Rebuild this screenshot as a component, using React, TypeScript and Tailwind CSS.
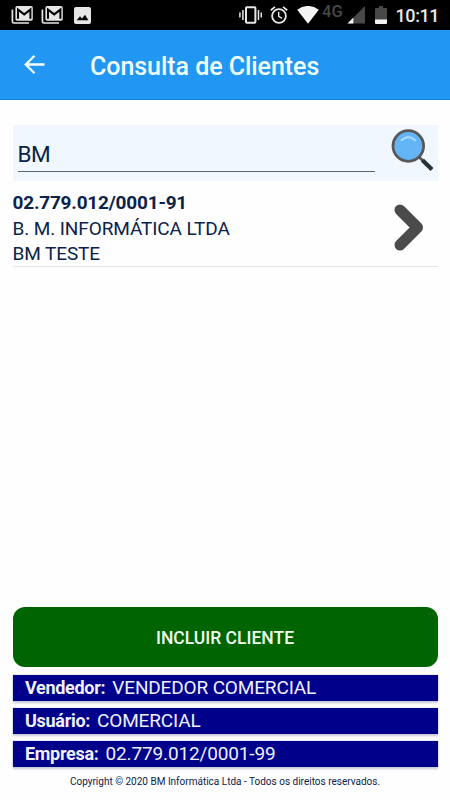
import React from "react";

function MailStackIcon() {
  return (
    <svg width="22" height="18" viewBox="0 0 22 18" className="block shrink-0">
      <path d="M1.4 3.5V15.5Q1.4 17 2.9 17H18" fill="none" stroke="#e6e6e6" strokeWidth="1.7" />
      <rect x="4.4" y="0" width="17.4" height="14.8" rx="1.8" fill="#e6e6e6" />
      <path d="M7 12.8V3.6L13.2 8.4L19.4 3.6V12.8" fill="none" stroke="#000" strokeWidth="2" />
    </svg>
  );
}

function ImageIcon() {
  return (
    <svg width="17" height="17" viewBox="0 0 17 17" className="block shrink-0">
      <rect width="17" height="17" rx="2" fill="#e6e6e6" />
      <path d="M2.7 13.3L6 9.3L8 11.6L11 7.7L14.4 13.3Z" fill="#000" />
    </svg>
  );
}

function VibrateIcon() {
  return (
    <svg width="23" height="18" viewBox="0 0 23 18" className="block shrink-0" fill="none" stroke="#e6e6e6">
      <rect x="7" y="1.2" width="9.4" height="15.6" rx="0.8" strokeWidth="2" />
      <path d="M3.9 4V14M19.5 4V14M0.9 6.4V11.6M22.3 6.4V11.6" strokeWidth="1.5" />
    </svg>
  );
}

function AlarmIcon() {
  return (
    <svg width="18" height="18" viewBox="0 0 18 18" className="block shrink-0" fill="none" stroke="#e6e6e6">
      <circle cx="9" cy="10" r="6.9" strokeWidth="1.8" />
      <path d="M0.8 4.3L5 0.9M17.2 4.3L13 0.9" strokeWidth="1.8" />
      <path d="M8.7 5.8V10.3L12 12.4" strokeWidth="1.4" />
    </svg>
  );
}

function WifiIcon() {
  return (
    <svg width="22" height="18" viewBox="0 0 22 18" className="block shrink-0">
      <path d="M0.2 3.7Q11 -3.8 21.8 3.7L11 17.8Z" fill="#f4f4f4" />
    </svg>
  );
}

function SignalIcon() {
  return (
    <svg width="18" height="18" viewBox="0 0 18 18" className="block shrink-0">
      <path d="M18 0V17.5H0.5Z" fill="#484848" />
      <path d="M6.4 11.6V17.5H0.5Z" fill="#f4f4f4" />
    </svg>
  );
}

function BatteryIcon() {
  return (
    <svg width="12" height="18" viewBox="0 0 12 18" className="block shrink-0">
      <path d="M4 0H8V2H11Q12 2 12 3V14H0V3Q0 2 1 2H4Z" fill="#484848" />
      <path d="M0 13.6H12V17Q12 18 11 18H1Q0 18 0 17Z" fill="#f4f4f4" />
    </svg>
  );
}

function SearchGlass() {
  return (
    <svg width="43" height="43" viewBox="0 0 43 43" className="block">
      <path d="M28 28L40 39.5" stroke="#555b60" strokeWidth="3" />
      <path d="M31.5 31.2L41 40.4" stroke="#263238" strokeWidth="4.2" />
      <circle cx="17.3" cy="17" r="15.3" fill="#64b5f6" stroke="#585858" strokeWidth="2.8" />
      <path d="M10.5 11.3Q17.3 4.9 24.1 11.3" fill="none" stroke="#a9dcff" strokeWidth="2" strokeLinecap="round" />
    </svg>
  );
}

function ChevronIcon() {
  return (
    <svg width="30" height="47" viewBox="0 0 30 47" className="block">
      <path d="M6 6L23.5 23.5L6 41" fill="none" stroke="#4b4b4b" strokeWidth="11" strokeLinecap="round" strokeLinejoin="round" />
    </svg>
  );
}

function InfoRow({ label, value }: { label: string; value: string }) {
  return (
    <div className="flex h-[26px] items-center gap-[7px] whitespace-nowrap bg-[#00008b] pl-[12.5px] text-[#f0f0ff] shadow-[0_2px_2px_#c9c9d6,0_0_1px_#8888bb]">
      <span className="text-[18px] font-bold leading-[26px] tracking-[-0.3px]">{label}</span>
      <span className="pt-px text-[19px] leading-[26px] tracking-[-0.15px]">{value}</span>
    </div>
  );
}

export default function App() {
  return (
    <div className="flex h-[800px] w-[450px] flex-col overflow-hidden bg-[#fefefe] font-['Roboto',sans-serif] text-[#0b2349]">
      <div className="flex h-[30px] shrink-0 items-start bg-black pl-[11px] pt-[6px]">
        <MailStackIcon />
        <div className="w-[8px]" />
        <MailStackIcon />
        <div className="w-[11px]" />
        <div className="pt-px"><ImageIcon /></div>
        <div className="w-[148px]" />
        <VibrateIcon />
        <div className="w-[8px]" />
        <AlarmIcon />
        <div className="w-[9px]" />
        <WifiIcon />
        <span className="w-[28px] shrink-0 pl-[3px] text-[16.5px] font-medium leading-[11px] text-[#484848]">4G</span>
        <SignalIcon />
        <div className="w-[10px]" />
        <BatteryIcon />
        <span className="pl-[8.5px] text-[18px] font-medium leading-[20px] tracking-[-0.4px] text-[#e8e8e8]">10:11</span>
      </div>

      <header className="flex h-[70px] shrink-0 items-center border-b border-[#1b84d8] bg-[#2196f3] pl-[24px]">
        <svg width="21" height="20" viewBox="0 0 21 20" className="block shrink-0" fill="none" stroke="#f2ffff" strokeWidth="2.3">
          <path d="M20.5 9.5H2M10.5 0.8L1.8 9.5L10.5 18.2" />
        </svg>
        <h1 className="pl-[45px] pt-[5px] text-[25px] font-medium leading-[30px] tracking-[-0.05px] text-[#f0ffff]">Consulta de Clientes</h1>
      </header>

      <main className="flex flex-1 flex-col px-[12.5px] pt-[25px]">
        <div className="flex h-[56px] bg-[#f0f7ff]">
          <div className="ml-[5px] flex h-[47px] w-[357px] items-end border-b border-[#626270] pb-[3px] text-[22.5px] leading-[28px] tracking-[-0.4px]">BM</div>
          <div className="ml-[16px] pt-[4px]"><SearchGlass /></div>
        </div>

        <div className="flex h-[86px] justify-between border-b border-[#e6e6e6] pt-[9px]">
          <div className="whitespace-nowrap text-[19px] leading-[25.5px]">
            <p className="font-bold tracking-[-0.2px]">02.779.012/0001-91</p>
            <p className="tracking-[-0.1px]">B. M. INFORMÁTICA LTDA</p>
            <p className="tracking-[-0.1px]">BM TESTE</p>
          </div>
          <div className="pr-[14px] pt-[13.5px]"><ChevronIcon /></div>
        </div>

        <div className="mt-auto flex h-[59.5px] items-center justify-center rounded-[12px] bg-[#006400] pt-[2px] text-[17.5px] font-medium text-[#f0fff0]">
          INCLUIR CLIENTE
        </div>
        <div className="mt-[8px] flex flex-col gap-[7px]">
          <InfoRow label="Vendedor:" value="VENDEDOR COMERCIAL" />
          <InfoRow label="Usuário:" value="COMERCIAL" />
          <InfoRow label="Empresa:" value="02.779.012/0001-99" />
        </div>
        <footer className="h-[33.5px] whitespace-nowrap pt-[8px] text-center text-[10px] leading-[14px]">
          Copyright © 2020 BM Informática Ltda - Todos os direitos reservados.
        </footer>
      </main>
    </div>
  );
}
